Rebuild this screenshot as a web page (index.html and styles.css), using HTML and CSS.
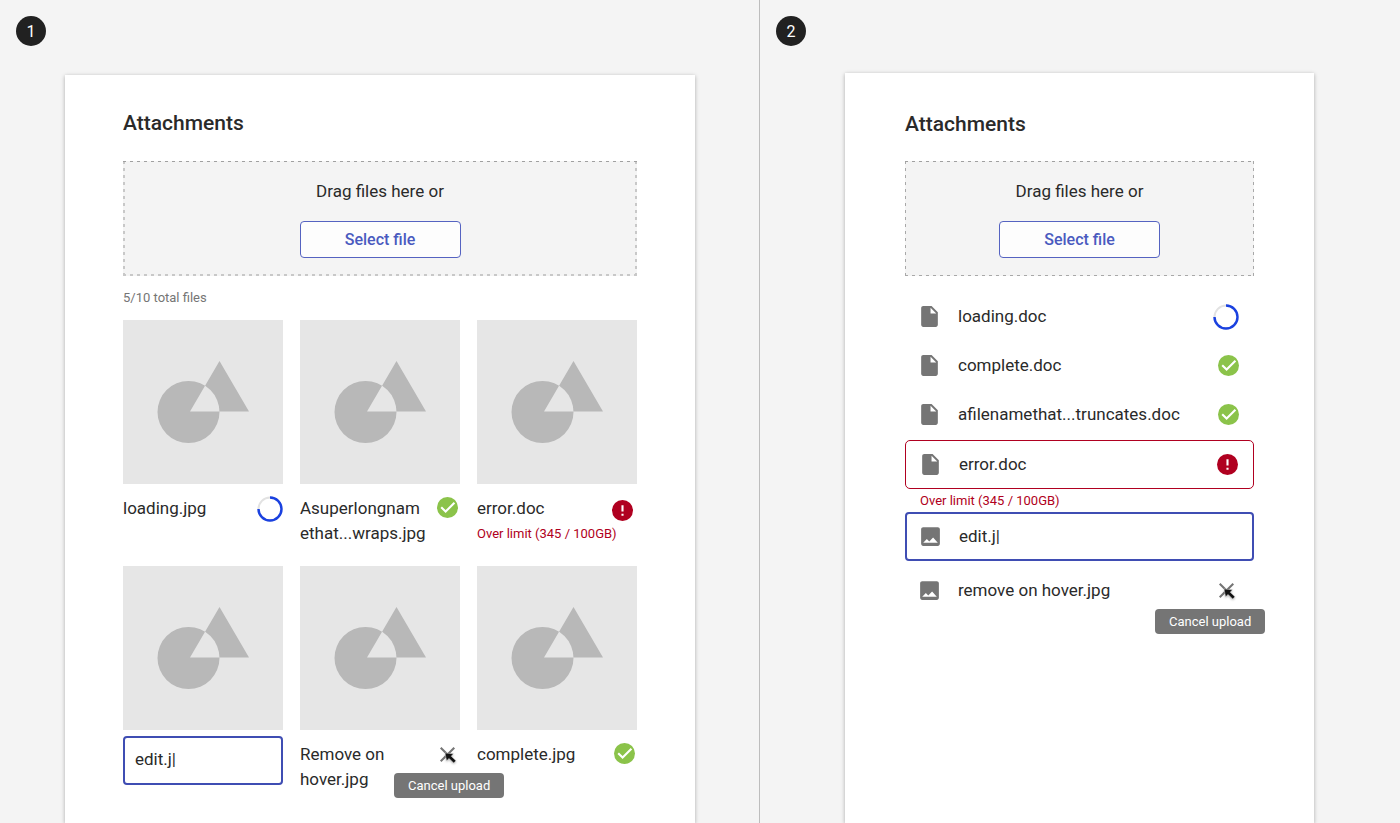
FILE: index.html
```html
<!DOCTYPE html>
<html lang="en">
<head>
<meta charset="utf-8">
<title>Attachments</title>
<link rel="stylesheet" href="styles.css">
</head>
<body>
<svg class="sprite" aria-hidden="true">
  <symbol id="art" viewBox="0 0 160 164"><path fill="#b8b8b8" fill-rule="evenodd" d="M34.5 92a31 31 0 1 0 62 0a31 31 0 1 0-62 0zM96.500 41L126 91.500H67z"/></symbol>
  <symbol id="spinner" viewBox="0 0 26 26"><circle cx="13" cy="13" r="11.500" fill="none" stroke="#e2e2e2" stroke-width="2"/><path d="M13 1.500A11.500 11.500 0 1 1 1.500 13" fill="none" stroke="#1a41e0" stroke-width="2.400"/></symbol>
  <symbol id="check" viewBox="2 2 20 20"><circle cx="12" cy="12" r="10" fill="#8bc34a"/><path d="M6 11.700l4.200 4.200 8.400-8.400" fill="none" stroke="#fff" stroke-width="2"/></symbol>
  <symbol id="error" viewBox="2 2 20 20"><circle cx="12" cy="12" r="10" fill="#b00020"/><path fill="#fff" d="M11 7h2v6h-2zM11 15h2v2h-2z"/></symbol>
  <symbol id="close" viewBox="0 0 24 24"><path d="M5.500 5.500l13 13M18.500 5.500l-13 13" stroke="#757575" stroke-width="2"/></symbol>
  <symbol id="file" viewBox="0 0 24 24"><path fill="#757575" d="M6 2c-1.100 0-2 .9-2 2v16c0 1.100.9 2 2 2h12c1.100 0 2-.9 2-2V8l-6-6H6zm7 7V3.500L18.500 9H13z"/></symbol>
  <symbol id="image" viewBox="0 0 24 24"><path fill="#757575" d="M21 19V5c0-1.100-.9-2-2-2H5c-1.100 0-2 .9-2 2v14c0 1.100.9 2 2 2h14c1.100 0 2-.9 2-2zM8.500 14.500l2.300 2.300L14.500 13l4.500 5H5l3.500-3.500z"/></symbol>
  <symbol id="cursor" viewBox="0 0 14 14"><path d="M2 2l8.500.8-2.300 2.400 4.800 4.600-2.300 2.200-4.600-4.600L3.600 9.800z" fill="#111" stroke="#fff" stroke-width=".4"/></symbol>
</svg>
<main class="board">
  <section class="panel panel-grid">
    <span class="badge">1</span>
    <article class="card">
      <h2 class="title">Attachments</h2>
      <div class="dropzone">
        <p class="drop-text">Drag files here or</p>
        <button class="select-button" type="button">Select file</button>
      </div>
      <p class="total">5/10 total files</p>
      <ul class="tiles">
        <li><svg class="thumb"><use href="#art"/></svg>
          <div class="caption"><span class="name">loading.jpg</span><svg class="spinner"><use href="#spinner"/></svg></div></li>
        <li><svg class="thumb"><use href="#art"/></svg>
          <div class="caption"><span class="name">Asuperlongnam<wbr>ethat...wraps.jpg</span><svg class="status"><use href="#check"/></svg></div></li>
        <li><svg class="thumb"><use href="#art"/></svg>
          <div class="caption"><div class="name">error.doc<p class="error-text">Over limit (345 / 100GB)</p></div><svg class="status status-error"><use href="#error"/></svg></div></li>
        <li><svg class="thumb"><use href="#art"/></svg>
          <input class="name-input" type="text" value="edit.j|" aria-label="File name"></li>
        <li><svg class="thumb"><use href="#art"/></svg>
          <div class="caption"><span class="name">Remove on hover.jpg</span>
            <button class="cancel" type="button" aria-label="Cancel"><svg class="icon"><use href="#close"/></svg><svg class="cursor"><use href="#cursor"/></svg><span class="tooltip">Cancel upload</span></button></div></li>
        <li><svg class="thumb"><use href="#art"/></svg>
          <div class="caption"><span class="name">complete.jpg</span><svg class="status"><use href="#check"/></svg></div></li>
      </ul>
    </article>
  </section>
  <section class="panel panel-list">
    <span class="badge">2</span>
    <article class="card">
      <h2 class="title">Attachments</h2>
      <div class="dropzone">
        <p class="drop-text">Drag files here or</p>
        <button class="select-button" type="button">Select file</button>
      </div>
      <ul class="rows">
        <li class="row"><svg class="icon"><use href="#file"/></svg><span class="row-name">loading.doc</span><svg class="spinner"><use href="#spinner"/></svg></li>
        <li class="row"><svg class="icon"><use href="#file"/></svg><span class="row-name">complete.doc</span><svg class="status"><use href="#check"/></svg></li>
        <li class="row"><svg class="icon"><use href="#file"/></svg><span class="row-name">afilenamethat...truncates.doc</span><svg class="status"><use href="#check"/></svg></li>
        <li><div class="row row-error"><svg class="icon"><use href="#file"/></svg><span class="row-name">error.doc</span><svg class="status"><use href="#error"/></svg></div>
          <p class="error-text">Over limit (345 / 100GB)</p></li>
        <li class="row row-edit"><svg class="icon"><use href="#image"/></svg><input class="row-name" type="text" value="edit.j|" aria-label="File name"></li>
        <li class="row row-last"><svg class="icon"><use href="#image"/></svg><span class="row-name">remove on hover.jpg</span>
          <button class="cancel" type="button" aria-label="Cancel"><svg class="icon"><use href="#close"/></svg><svg class="cursor"><use href="#cursor"/></svg><span class="tooltip">Cancel upload</span></button></li>
      </ul>
    </article>
  </section>
</main>
</body>
</html>
```
FILE: styles.css
```css
* { box-sizing: border-box; }
body, p, h2, ul { margin: 0; padding: 0; }
ul { list-style: none; }
svg { display: block; flex: none; }
body {
  background: #f4f4f4;
  color: #2a2a2a;
  font: 17px/25px Roboto, "Liberation Sans", sans-serif;
}
button, input { font: inherit; color: inherit; }
.sprite { position: absolute; width: 0; height: 0; }

.board {
  display: grid;
  grid-template-columns: 760fr 640fr;
  min-height: 100vh;
}
.panel {
  display: flex;
  flex-direction: column;
  min-width: 0;
}
.panel-grid {
  gap: 29px;
  padding: 16px 64px 0 65px;
  border-right: 1px solid #bdbdbd;
}
.panel-list { gap: 27px; padding: 16px 86px 0 85px; }
.badge {
  width: 30px;
  height: 30px;
  border-radius: 50%;
  background: #212121;
  color: #fff;
  font-size: 16px;
  line-height: 31px;
  text-align: center;
}
.panel-grid .badge { margin-left: -49px; }
.panel-list .badge { margin-left: -69px; }

.card {
  flex: 1;
  background: #fff;
  box-shadow: 0 1px 4px rgba(0, 0, 0, .3);
}
.panel-grid .card { padding: 36px 58px 20px; }
.panel-list .card { padding: 39px 60px 20px; }
.title {
  margin-bottom: 26px;
  font-size: 21px;
  line-height: 24px;
  font-weight: 500;
}
.panel-list .title { margin-bottom: 25px; }

.dropzone {
  --edge: 1px;
  --edge-color: #a8a8a8;
  display: flex;
  flex-direction: column;
  align-items: center;
  gap: 17px;
  padding: 18px 0;
  background:
    repeating-linear-gradient(90deg, #a0a0a0 0 3px, transparent 3px 7px) top / 100% 1px no-repeat,
    repeating-linear-gradient(90deg, var(--edge-color) 0 3px, transparent 3px 7px) bottom / 100% var(--edge) no-repeat,
    repeating-linear-gradient(var(--edge-color) 0 3px, transparent 3px 7px) left / var(--edge) 100% no-repeat,
    repeating-linear-gradient(var(--edge-color) 0 3px, transparent 3px 7px) right / var(--edge) 100% no-repeat,
    #f4f4f4;
}
.panel-grid .dropzone { --edge: 2px; --edge-color: #c8c8c8; }
.select-button {
  width: 161px;
  height: 37px;
  padding: 0;
  border: 1px solid #5563c1;
  border-radius: 4px;
  background: #fdfdfd;
  color: #4a5abf;
  font-size: 16px;
  font-weight: 500;
}

.total {
  margin: 14px 0;
  color: #757575;
  font-size: 13px;
  line-height: 16px;
}
.tiles {
  display: grid;
  grid-template-columns: repeat(3, minmax(0, 1fr));
  gap: 20px 17px;
}
.thumb {
  width: 100%;
  height: auto;
  aspect-ratio: 160 / 164;
  background: #e6e6e6;
}
.caption {
  display: flex;
  align-items: flex-start;
  justify-content: space-between;
  padding-top: 12px;
}
.name { flex: 1 1 0; min-width: 0; }
.spinner { width: 26px; height: 26px; }
.status { width: 21px; height: 21px; }
.caption .status { margin: 1px 2px 0 0; }
.caption .status-error { margin: 4px 4px 0 0; }
.error-text {
  color: #b00020;
  font-size: 13px;
  white-space: nowrap;
}
.name-input {
  display: block;
  width: 100%;
  height: 49px;
  margin-top: 6px;
  padding: 0 10px 3px;
  border: 2px solid #3f4db3;
  border-radius: 4px;
  background: #fff;
  outline: 0;
}
.icon { width: 25px; height: 25px; }
.cancel {
  position: relative;
  padding: 0;
  border: 0;
  background: none;
}
.cursor {
  position: absolute;
  top: 9px;
  left: 8px;
  width: 14px;
  height: 14px;
  filter: drop-shadow(0 1px 1px rgba(0, 0, 0, .3));
}
.tooltip {
  position: absolute;
  top: 31px;
  left: -41px;
  padding: 0 14px;
  border-radius: 4px;
  background: #757575;
  color: #fff;
  font-size: 13px;
  line-height: 25px;
  white-space: nowrap;
}

.rows { padding-top: 16px; }
.row {
  display: flex;
  align-items: center;
  gap: 16px;
  height: 49px;
  padding: 0 15px 0 12px;
}
.row-name { flex: 1; min-width: 0; }
.row-error {
  margin-top: 1px;
  border: 1px solid #b00020;
  border-radius: 5px;
}
.rows .error-text { padding-left: 15px; line-height: 23px; }
.row-edit {
  padding-left: 11px;
  border: 2px solid #3f4db3;
  border-radius: 4px;
}
.row-edit .row-name {
  padding: 0;
  border: 0;
  background: none;
  outline: 0;
}
.row-last { margin-top: 5px; }
.row-last .tooltip { left: -59px; }
```
